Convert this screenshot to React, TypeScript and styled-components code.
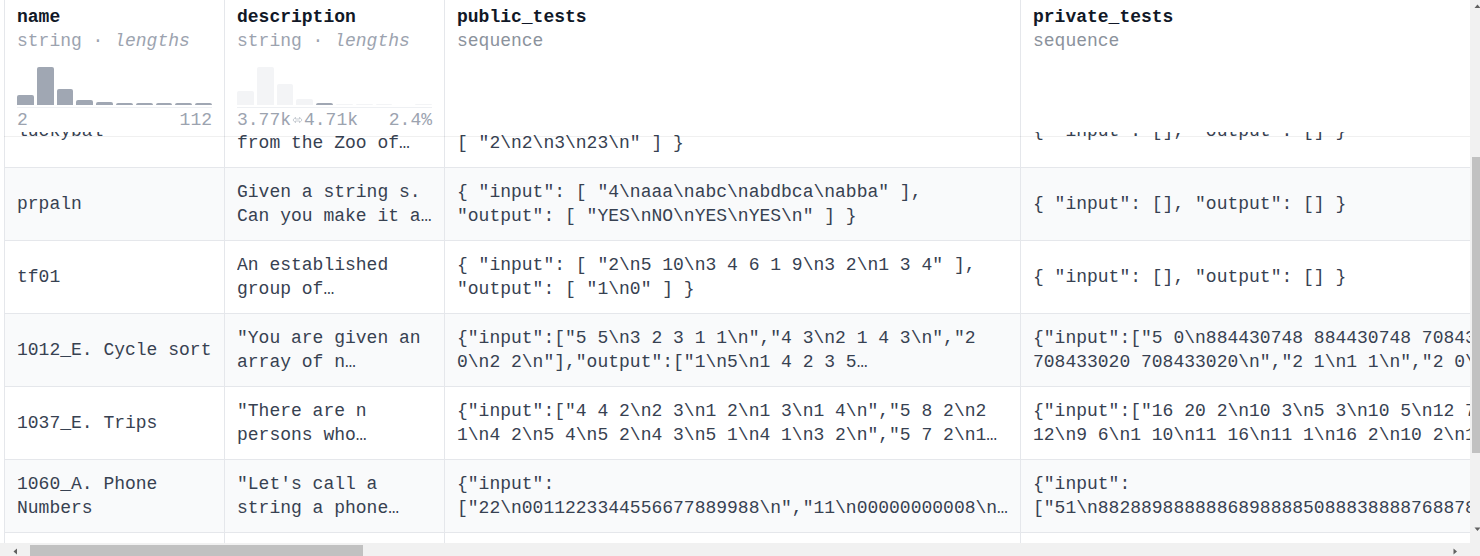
import React from "react";
import styled, { createGlobalStyle } from "styled-components";

const MONO = `"Liberation Mono", "DejaVu Sans Mono", monospace`;
const BORDER = "#e5e7eb";

const VIEW_W = 1470;
const VIEW_H = 543;
const BAR = 17;
const H_BTN = 30;
const HEADER_H = 132;
const ROW_H = 73;
const SCROLL_TOP = 257;
const SCROLL_LEFT = 0;

const GlobalStyle = createGlobalStyle`
  html, body { margin: 0; padding: 0; background: #ffffff; overflow: hidden; }
  body { font-family: ${MONO}; }
  * { box-sizing: border-box; }
`;

/* ---------- frame with viewport + scrollbars ---------- */

const Frame = styled.div`
  display: grid;
  grid-template-columns: ${VIEW_W}px ${BAR}px;
  grid-template-rows: ${VIEW_H}px ${BAR}px;
  width: ${VIEW_W + BAR}px;
  height: ${VIEW_H + BAR}px;
  background: #ffffff;
`;

const Viewport = styled.div`
  overflow: hidden;
  position: relative;
`;

const VScroll = styled.div`
  display: flex;
  flex-direction: column;
  background: #f1f1f1;
`;

const HScroll = styled.div`
  display: flex;
  background: #f1f1f1;
`;

const Corner = styled.div`
  background: #f1f1f1;
`;

const ScrollButton = styled.div<{ $horizontal?: boolean; $pad?: string }>`
  flex: none;
  width: ${(p) => (p.$horizontal ? `${H_BTN}px` : "100%")};
  height: ${(p) => (p.$horizontal ? "100%" : `${BAR}px`)};
  display: flex;
  align-items: ${(p) => (p.$horizontal ? "center" : "flex-start")};
  justify-content: center;
  padding: ${(p) => p.$pad || "0"};
`;

const Track = styled.div<{ $horizontal?: boolean }>`
  flex: 1;
  display: flex;
  flex-direction: ${(p) => (p.$horizontal ? "row" : "column")};
  min-width: 0;
  min-height: 0;
`;

const Thumb = styled.div<{ $horizontal?: boolean }>`
  flex: none;
  background: #c1c1c1;
  ${(p) => (p.$horizontal ? "margin-top: 2px; margin-bottom: 2px;" : "margin-left: 2px; margin-right: 2px;")}
`;

const Arrow: React.FC<{ dir: "up" | "down" | "left" | "right" }> = ({ dir }) => {
  const d = {
    up: "M3.5 0.5 L6.5 4 L0.5 4 Z",
    down: "M3.5 4 L6.5 0.5 L0.5 0.5 Z",
    left: "M0.5 3.5 L4 0.5 L4 6.5 Z",
    right: "M4 3.5 L0.5 0.5 L0.5 6.5 Z",
  }[dir];
  const vertical = dir === "up" || dir === "down";
  return (
    <svg width={vertical ? 7 : 5} height={vertical ? 5 : 7} viewBox={vertical ? "0 0 7 5" : "0 0 5 7"}>
      <path d={d} fill="#606060" />
    </svg>
  );
};

/* ---------- table ---------- */

const Table = styled.div`
  width: max-content;
  margin-left: 4px;
  font-family: ${MONO};
  font-size: 18px;
  line-height: 24px;
`;

const HeaderRow = styled.div`
  position: sticky;
  top: 0;
  z-index: 2;
  display: flex;
  height: ${HEADER_H}px;
  background: #ffffff;

  &::after {
    content: "";
    position: absolute;
    left: 0;
    right: 0;
    top: 100%;
    height: 4px;
    border-bottom: 1px solid rgba(0, 0, 0, 0.06);
    pointer-events: none;
  }
`;

const HeaderCell = styled.div<{ $w: number }>`
  flex: none;
  width: ${(p) => p.$w}px;
  border-left: 1px solid ${BORDER};
  padding: 5px 12px 0 12px;
  display: flex;
  flex-direction: column;
  overflow: hidden;
`;

const ColTitle = styled.div`
  font-weight: 700;
  color: #111827;
  white-space: nowrap;
  overflow: hidden;
  text-overflow: ellipsis;
`;

const TypeLine = styled.div<{ $muted?: boolean }>`
  white-space: nowrap;
  color: ${(p) => (p.$muted ? "#8b929c" : "#9ca3af")};
`;

const TypeHint = styled.i`
  font-style: italic;
`;

const Bars = styled.div`
  margin-top: 9px;
  height: 43px;
  display: flex;
  align-items: flex-end;
  gap: 3px;
`;

const Bar = styled.div<{ $h: number; $c: string }>`
  flex: 1;
  height: ${(p) => p.$h}px;
  background: ${(p) => p.$c};
  border-radius: 2px 2px 0 0;
`;

const Baseline = styled.div`
  margin-top: 2px;
  height: 1px;
  background: #eef0f3;
`;

const RangeLabels = styled.div`
  display: flex;
  justify-content: space-between;
  align-items: center;
  color: #9ca3af;
  white-space: nowrap;
`;

const RangeFrom = styled.span`
  display: inline-flex;
  align-items: center;
`;

const BodyRow = styled.div<{ $alt: boolean }>`
  display: flex;
  border-top: 1px solid ${BORDER};
  background: ${(p) => (p.$alt ? "#f9fafb" : "#ffffff")};
`;

const Cell = styled.div<{ $w: number }>`
  flex: none;
  width: ${(p) => p.$w}px;
  height: ${ROW_H - 1}px;
  border-left: 1px solid ${BORDER};
  padding: 0 12px;
  display: flex;
  align-items: center;
  color: #374151;
`;

const CellText = styled.div`
  width: 100%;
  display: -webkit-box;
  -webkit-box-orient: vertical;
  -webkit-line-clamp: 2;
  overflow: hidden;
  overflow-wrap: break-word;
  white-space: normal;
`;

type Kind = "string" | "sequence" | "plain";

interface Hist {
  bars: number[];
  highlight?: number;
  base: string;
  accent?: string;
  left: React.ReactNode;
  right: string;
}

interface Column {
  key: string;
  title: string;
  width: number;
  kind: Kind;
  type: string;
  hist?: Hist;
}

const RangeIcon = () => (
  <svg width="11" height="8" viewBox="0 0 11 8" style={{ margin: "0 1px" }}>
    <path
      d="M1 4 L3.5 1.2 V3 H7.5 V1.2 L10 4 L7.5 6.8 V5 H3.5 V6.8 Z"
      fill="none"
      stroke="#c3c8cf"
      strokeWidth="0.9"
      strokeLinejoin="round"
    />
  </svg>
);

const columns: Column[] = [
  {
    key: "name",
    title: "name",
    width: 220,
    kind: "string",
    type: "string",
    hist: {
      bars: [10, 38, 16, 5, 3, 2, 2, 2, 2, 2],
      base: "#a0a7b3",
      left: "2",
      right: "112",
    },
  },
  {
    key: "description",
    title: "description",
    width: 220,
    kind: "string",
    type: "string",
    hist: {
      bars: [14, 38, 21, 6, 2, 1, 1, 1, 0, 1],
      highlight: 4,
      base: "#f3f4f6",
      accent: "#a0a7b3",
      left: (
        <RangeFrom>
          3.77k
          <RangeIcon />
          4.71k
        </RangeFrom>
      ),
      right: "2.4%",
    },
  },
  { key: "public_tests", title: "public_tests", width: 576, kind: "sequence", type: "sequence" },
  { key: "private_tests", title: "private_tests", width: 576, kind: "sequence", type: "sequence" },
  { key: "generated_tests", title: "generated_tests", width: 576, kind: "sequence", type: "sequence" },
  { key: "source", title: "source", width: 220, kind: "plain", type: "int64" },
  { key: "difficulty", title: "difficulty", width: 220, kind: "plain", type: "int64" },
  { key: "solutions", title: "solutions", width: 576, kind: "sequence", type: "sequence" },
  { key: "incorrect_solutions", title: "incorrect_solutions", width: 576, kind: "sequence", type: "sequence" },
  { key: "cf_contest_id", title: "cf_contest_id", width: 220, kind: "plain", type: "int64" },
  { key: "cf_index", title: "cf_index", width: 220, kind: "plain", type: "string" },
  { key: "cf_points", title: "cf_points", width: 220, kind: "plain", type: "float64" },
  { key: "cf_rating", title: "cf_rating", width: 220, kind: "plain", type: "int64" },
  { key: "cf_tags", title: "cf_tags", width: 220, kind: "sequence", type: "sequence" },
  { key: "is_description_translated", title: "is_description_translated", width: 220, kind: "plain", type: "bool" },
  { key: "untranslated_description", title: "untranslated_description", width: 220, kind: "plain", type: "string" },
  { key: "time_limit", title: "time_limit", width: 260, kind: "plain", type: "dict" },
  { key: "memory_limit_bytes", title: "memory_limit_bytes", width: 220, kind: "plain", type: "int64" },
  { key: "input_file", title: "input_file", width: 220, kind: "plain", type: "string" },
  { key: "output_file", title: "output_file", width: 220, kind: "plain", type: "string" },
];

const EMPTY = `{ "input": [], "output": [] }`;

interface RowData {
  name: string;
  description: string;
  public_tests: string;
  private_tests: string;
  difficulty: string;
}

const rows: RowData[] = [
  {
    name: "brcktsrm",
    description:
      "Problem description. Vipul is a hardworking super-hero who maintains the bracket ratio of all the strings in the world.",
    public_tests: String.raw`{ "input": [ "3\n((()))\n(())()\n()(()" ], "output": [ "YES\nYES\nNO" ] }`,
    private_tests: EMPTY,
    difficulty: "6",
  },
  {
    name: "comm3",
    description:
      "The Chef likes to stay in touch with his staff. So, the Chef, the head server, and the sous-chef all carry two-way transceivers.",
    public_tests: String.raw`{ "input": [ "3\n1\n0 1\n0 0\n1 0\n2\n0 1\n0 0\n1 0\n2\n0 0\n0 2\n2 1" ], "output": [ "yes\nyes\nno" ] }`,
    private_tests: EMPTY,
    difficulty: "1",
  },
  {
    name: "gcd2",
    description:
      "Frank explained its friend Felman the algorithm of Euclides to calculate the GCD of two numbers.",
    public_tests: String.raw`{ "input": [ "2\n2 6\n10 11" ], "output": [ "2\n1" ] }`,
    private_tests: EMPTY,
    difficulty: "2",
  },
  {
    name: "luckybal",
    description:
      "A Little Elephant from the Zoo of Lviv likes lucky strings, i.e., the strings that consist only of the lucky digits 4 and 7.",
    public_tests: String.raw`{ "input": [ "4\n47\n74\n477\n4747477" ], "output": [ "2\n2\n3\n23\n" ] }`,
    private_tests: EMPTY,
    difficulty: "2",
  },
  {
    name: "prpaln",
    description:
      "Given a string s. Can you make it a palindrome by deleting exactly one character? Note that size of the string after deletion would be one less than it was before.",
    public_tests: String.raw`{ "input": [ "4\naaa\nabc\nabdbca\nabba" ], "output": [ "YES\nNO\nYES\nYES\n" ] }`,
    private_tests: EMPTY,
    difficulty: "2",
  },
  {
    name: "tf01",
    description:
      "An established group of scientists are working on finding solution to NP hard problems.",
    public_tests: String.raw`{ "input": [ "2\n5 10\n3 4 6 1 9\n3 2\n1 3 4" ], "output": [ "1\n0" ] }`,
    private_tests: EMPTY,
    difficulty: "6",
  },
  {
    name: "1012_E. Cycle sort",
    description:
      '"You are given an array of n positive integers a_1, a_2, ..., a_n. For each operation you choose some cycle.',
    public_tests: String.raw`{"input":["5 5\n3 2 3 1 1\n","4 3\n2 1 4 3\n","2 0\n2 2\n"],"output":["1\n5\n1 4 2 3 5 \n","-1\n","0\n"]}`,
    private_tests: String.raw`{"input":["5 0\n884430748 884430748 708433020 708433020 708433020\n","2 1\n1 1\n","2 0\n1 2\n"],"output":["2\n2\n1 2\n3\n3 4 5\n","0\n","1\n2\n1 2\n"]}`,
    difficulty: "11",
  },
  {
    name: "1037_E. Trips",
    description:
      '"There are n persons who initially don\'t know each other. On each morning, two of them, who were not friends before, become friends.',
    public_tests: String.raw`{"input":["4 4 2\n2 3\n1 2\n1 3\n1 4\n","5 8 2\n2 1\n4 2\n5 4\n5 2\n4 3\n5 1\n4 1\n3 2\n","5 7 2\n1 5\n3 2\n2 5\n3 4\n1 2\n5 3\n1 3\n"],"output":["0\n0\n3\n3\n","0\n0\n0\n3\n3\n4\n4\n5\n","0\n0\n0\n0\n3\n4\n4\n"]}`,
    private_tests: String.raw`{"input":["16 20 2\n10 3\n5 3\n10 5\n12 7\n7 3\n4 12\n9 6\n1 10\n11 16\n11 1\n16 2\n10 2\n14 4\n15 14\n4 13\n13 15\n1 8\n7 15\n1 7\n8 15\n"],"output":["0\n0\n3\n3\n"]}`,
    difficulty: "11",
  },
  {
    name: "1060_A. Phone Numbers",
    description:
      '"Let\'s call a string a phone number if it has length 11 and fits the pattern "8xxxxxxxxxx", where each "x" is replaced by a digit.',
    public_tests: String.raw`{"input":["22\n0011223344556677889988\n","11\n00000000008\n","11\n31415926535\n"],"output":["2\n","1\n","0\n"]}`,
    private_tests: String.raw`{"input":["51\n882889888888689888850888388887688788888888888\n","11\n88888888888\n"],"output":["4\n","1\n"]}`,
    difficulty: "7",
  },
  {
    name: "1081_E. Missing Numbers",
    description:
      '"Chouti is working on a strange math problem. There was a sequence of n positive integers x_1, x_2, ..., x_n.',
    public_tests: String.raw`{"input":["2\n9\n","6\n314 1592 6535\n","4\n9 2\n"],"output":["Yes\n4 5 16 11 64 44 \n","No\n","Yes\n1 8 99 \n"]}`,
    private_tests: String.raw`{"input":["2\n1\n","2\n99991\n"],"output":["No\n","Yes\n2500 2500 \n"]}`,
    difficulty: "11",
  },
  {
    name: "1101_F. Trucks and Cities",
    description:
      '"There are n cities along the road, which can be represented as a straight line. The i-th city is situated at the distance of a_i kilometers.',
    public_tests: String.raw`{"input":["7 6\n2 5 7 10 14 15 17\n1 3 10 0\n1 7 12 7\n4 5 13 3\n4 7 10 1\n4 7 10 1\n1 5 11 2\n"],"output":["55\n"]}`,
    private_tests: String.raw`{"input":["2 1\n1 2\n1 2 1 0\n"],"output":["1\n"]}`,
    difficulty: "12",
  },
];

const cellValue = (row: RowData, key: string): string => {
  const cf = /^(\d+)_([A-Z])\./.exec(row.name);
  switch (key) {
    case "name":
      return row.name;
    case "description":
      return row.description;
    case "public_tests":
      return row.public_tests;
    case "private_tests":
      return row.private_tests;
    case "generated_tests":
      return row.public_tests;
    case "source":
      return cf ? "2" : "1";
    case "difficulty":
      return row.difficulty;
    case "solutions":
      return `{ "language": [ 2, 2 ], "solution": [ "..." ] }`;
    case "incorrect_solutions":
      return `{ "language": [], "solution": [] }`;
    case "cf_contest_id":
      return cf ? cf[1] : "0";
    case "cf_index":
      return cf ? cf[2] : "";
    case "cf_points":
      return "0";
    case "cf_rating":
      return cf ? "2100" : "0";
    case "cf_tags":
      return "[]";
    case "is_description_translated":
      return "false";
    case "untranslated_description":
      return "";
    case "time_limit":
      return cf ? `{ "seconds": 2, "nanos": 0 }` : "null";
    case "memory_limit_bytes":
      return cf ? "256000000" : "0";
    default:
      return "";
  }
};

const CONTENT_H = HEADER_H + rows.length * ROW_H;
const CONTENT_W = 4 + columns.reduce((s, c) => s + c.width, 0);

const Histogram: React.FC<{ hist: Hist }> = ({ hist }) => (
  <>
    <Bars>
      {hist.bars.map((h, i) => (
        <Bar key={i} $h={h} $c={i === hist.highlight && hist.accent ? hist.accent : hist.base} />
      ))}
    </Bars>
    <Baseline />
    <RangeLabels>
      {typeof hist.left === "string" ? <span>{hist.left}</span> : hist.left}
      <span>{hist.right}</span>
    </RangeLabels>
  </>
);

const ColumnHeader: React.FC<{ col: Column }> = ({ col }) => (
  <HeaderCell $w={col.width}>
    <ColTitle>{col.title}</ColTitle>
    {col.kind === "string" ? (
      <TypeLine>
        string · <TypeHint>lengths</TypeHint>
      </TypeLine>
    ) : (
      <TypeLine $muted>{col.type}</TypeLine>
    )}
    {col.hist && <Histogram hist={col.hist} />}
  </HeaderCell>
);

export default function App() {
  const setScroll = React.useCallback((el: HTMLDivElement | null) => {
    if (el) {
      el.scrollTop = SCROLL_TOP;
      el.scrollLeft = SCROLL_LEFT;
    }
  }, []);

  const vTrack = VIEW_H - 2 * BAR;
  const vThumb = (vTrack * VIEW_H) / CONTENT_H;
  const vOffset = (vTrack * SCROLL_TOP) / CONTENT_H;
  const hTrack = VIEW_W - 2 * H_BTN;
  const hThumb = (hTrack * VIEW_W) / CONTENT_W;
  const hOffset = (hTrack * SCROLL_LEFT) / CONTENT_W;

  return (
    <>
      <GlobalStyle />
      <Frame>
        <Viewport ref={setScroll}>
          <Table>
            <HeaderRow>
              {columns.map((c) => (
                <ColumnHeader key={c.key} col={c} />
              ))}
            </HeaderRow>
            {rows.map((r, i) => (
              <BodyRow key={r.name} $alt={i % 2 === 0}>
                {columns.map((c) => (
                  <Cell key={c.key} $w={c.width}>
                    <CellText>{cellValue(r, c.key)}</CellText>
                  </Cell>
                ))}
              </BodyRow>
            ))}
          </Table>
        </Viewport>
        <VScroll>
          <ScrollButton $pad="4px 3px 0 0">
            <Arrow dir="up" />
          </ScrollButton>
          <Track>
            <Thumb style={{ marginTop: vOffset, height: vThumb }} />
          </Track>
          <ScrollButton $pad="1px 3px 0 0">
            <Arrow dir="down" />
          </ScrollButton>
        </VScroll>
        <HScroll>
          <ScrollButton $horizontal>
            <Arrow dir="left" />
          </ScrollButton>
          <Track $horizontal>
            <Thumb $horizontal style={{ marginLeft: hOffset, width: hThumb }} />
          </Track>
          <ScrollButton $horizontal>
            <Arrow dir="right" />
          </ScrollButton>
        </HScroll>
        <Corner />
      </Frame>
    </>
  );
}
